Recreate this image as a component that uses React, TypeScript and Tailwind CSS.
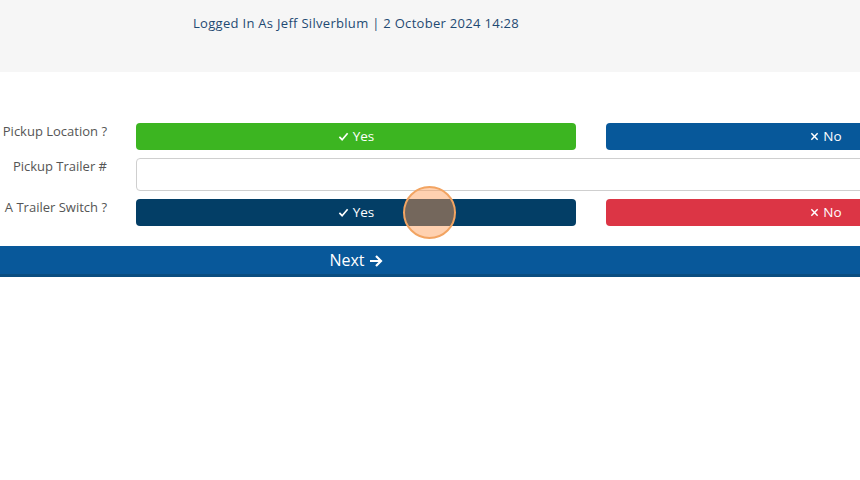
import React from 'react';

const font = { fontFamily: '"Open Sans", "Noto Sans", sans-serif' };

function Check() {
  return (
    <svg width="11" height="11" viewBox="0 0 12 12" className="inline-block mr-1 -mt-px">
      <path d="M1.5 6.5 L4.5 9.5 L10.5 2.5" fill="none" stroke="white" strokeWidth="1.8" />
    </svg>
  );
}

function Cross() {
  return (
    <svg width="9" height="9" viewBox="0 0 10 10" className="inline-block mr-1 -mt-px">
      <path d="M1.5 1.5 L8.5 8.5 M8.5 1.5 L1.5 8.5" fill="none" stroke="white" strokeWidth="1.6" />
    </svg>
  );
}

function Arrow() {
  return (
    <svg width="14" height="14" viewBox="0 0 14 14" className="inline-block ml-1 -mt-[2px]">
      <path d="M1 7 H12 M7 2 L12 7 L7 12" fill="none" stroke="white" strokeWidth="2.2" />
    </svg>
  );
}

interface ChoiceRowProps {
  label: string;
  yesClass: string;
  noClass: string;
}

function ChoiceRow({ label, yesClass, noClass }: ChoiceRowProps) {
  return (
    <div className="flex items-center h-[27px]">
      <div className="w-[107px] text-right text-[13px] text-[#555] whitespace-nowrap shrink-0 -mt-[9px]">{label}</div>
      <div className={`ml-[29px] w-[440px] shrink-0 h-[27px] rounded-[4px] ${yesClass} text-white text-[13.5px] flex items-center justify-center`}>
        <Check />Yes
      </div>
      <div className={`ml-[30px] w-[440px] shrink-0 h-[27px] rounded-[4px] ${noClass} text-white text-[13.5px] flex items-center justify-center`}>
        <Cross />No
      </div>
    </div>
  );
}

export default function App() {
  return (
    <div className="relative w-[860px] h-[480px] overflow-hidden bg-white" style={font}>
      <div className="h-[72px] bg-[#f6f6f6] pl-[193px] pt-[14px] text-[13px] tracking-[0.3px] text-[#1f4a73]">
        Logged In As Jeff Silverblum | 2 October 2024 14:28
      </div>

      <div className="pt-[51px] flex flex-col gap-[8px]">
        <ChoiceRow label="Pickup Location ?" yesClass="bg-[#3cb521]" noClass="bg-[#07589a]" />
        <div className="flex items-center h-[33px]">
          <div className="w-[107px] text-right text-[13px] text-[#555] whitespace-nowrap shrink-0 -mt-[15px]">Pickup Trailer #</div>
          <div className="ml-[29px] w-[760px] shrink-0 h-[33px] rounded-[4px] border border-[#cfcfcf] bg-white" />
        </div>
        <ChoiceRow label="A Trailer Switch ?" yesClass="bg-[#033e66]" noClass="bg-[#dc3545]" />
      </div>

      <div className="mt-[20px] h-[31px] bg-[#08589a] border-b-[3px] border-[#0a4d80] flex items-center">
        <div className="ml-[136px] w-[440px] text-center text-white text-[16px]">
          Next<Arrow />
        </div>
      </div>

      <div className="absolute left-[403px] top-[186px] w-[53px] h-[53px] rounded-full border-2 border-[#f2a462] bg-[#ff9a50]/45" />
    </div>
  );
}
